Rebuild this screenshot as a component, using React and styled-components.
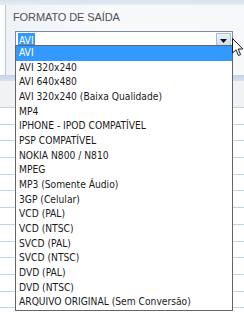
import React from "react";
import styled, { createGlobalStyle } from "styled-components";

const formats = [
  "AVI",
  "AVI 320x240",
  "AVI 640x480",
  "AVI 320x240 (Baixa Qualidade)",
  "MP4",
  "IPHONE - IPOD COMPATÍVEL",
  "PSP COMPATÍVEL",
  "NOKIA N800 / N810",
  "MPEG",
  "MP3 (Somente Áudio)",
  "3GP (Celular)",
  "VCD (PAL)",
  "VCD (NTSC)",
  "SVCD (PAL)",
  "SVCD (NTSC)",
  "DVD (PAL)",
  "DVD (NTSC)",
  "ARQUIVO ORIGINAL (Sem Conversão)",
];

const GlobalStyle = createGlobalStyle`
  html, body {
    margin: 0;
    padding: 0;
    width: 244px;
    height: 320px;
    overflow: hidden;
    background: #ffffff;
  }
  * { box-sizing: border-box; }
`;

const Cursor = () => (
  <CursorWrap>
    <svg width="12" height="19" viewBox="0 0 12 19">
      <path
        d="M0.5 0.5 L0.5 15 L4 11.8 L6.5 17.5 L8.6 16.6 L6.2 11 L10.8 11 Z"
        fill="#ffffff"
        stroke="#1a1a1a"
        strokeWidth="1"
        strokeLinejoin="round"
      />
    </svg>
  </CursorWrap>
);

const App = () => {
  const rows = Array.from({ length: 14 });

  return (
    <Page>
      <GlobalStyle />
      <TopStrip />
      <Panel>
        <Label>FORMATO DE SAÍDA</Label>
        <Select>
          <Current>
            <Selected>AVI</Selected>
          </Current>
          <DropButton>
            <svg width="7" height="4" viewBox="0 0 7 4">
              <path d="M0 0 L7 0 L3.5 4 Z" fill="#111" />
            </svg>
          </DropButton>
        </Select>
      </Panel>
      <HeaderBand />
      <Grid>
        {rows.map((_, i) => (
          <GridRow key={i} $shade={i === 0} />
        ))}
      </Grid>

      <List>
        {formats.map((f, i) => (
          <Option key={f} $active={i === 0}>
            {f}
          </Option>
        ))}
      </List>
      <Cursor />
    </Page>
  );
};

const itemFont = `"DejaVu Sans Condensed", "Liberation Sans", Arial, sans-serif`;

const Page = styled.div`
  position: relative;
  width: 244px;
  height: 320px;
  font-family: "Liberation Sans", Arial, sans-serif;
  background: #fbfcfd;
`;

const TopStrip = styled.div`
  height: 5px;
  background: linear-gradient(#d9e1ec, #e6ecf3);
`;

const Panel = styled.div`
  height: 70px;
  margin-left: 5px;
  border-left: 1px solid #b9c8da;
  padding: 4px 12px 0 7px;
  background: linear-gradient(to right, #eef2f7, #f8f9fb 40%, #f6f8fa);
`;

const Label = styled.div`
  font-size: 11px;
  color: #505050;
  height: 17px;
  line-height: 17px;
  letter-spacing: -0.1px;
`;

const Select = styled.div`
  display: flex;
  margin-left: 2px;
  margin-top: 5px;
  width: 218px;
  height: 19px;
  border: 1px solid #7e8a98;
  background: #ffffff;
  padding: 1px;
`;

const Current = styled.div`
  flex: 1;
  display: flex;
  align-items: center;
  padding-left: 1px;
`;

const Selected = styled.span`
  background: #3399ff;
  color: #ffffff;
  font-family: ${itemFont};
  font-size: 10.2px;
  line-height: 15px;
  padding: 0 1px;
`;

const DropButton = styled.div`
  width: 15px;
  display: flex;
  align-items: center;
  justify-content: center;
  border: 1px solid #a6bfd6;
  background: linear-gradient(#e9f3fb, #c9def0);
`;

const HeaderBand = styled.div`
  height: 6px;
  background: linear-gradient(#c5d3e4, #d8e2ee);
`;

const Grid = styled.div`
  display: flex;
  flex-direction: column;
`;

const GridRow = styled.div`
  height: ${(p) => (p.$shade ? "27px" : "16.7px")};
  border-bottom: 1px solid #c2d3e6;
  background: ${(p) => (p.$shade ? "#f1f2f4" : "#ffffff")};
`;

const List = styled.div`
  position: absolute;
  left: 15px;
  top: 45px;
  width: 218px;
  height: 266px;
  border: 1px solid #646464;
  background: #ffffff;
  display: flex;
  flex-direction: column;
`;

const Option = styled.div`
  height: 14.67px;
  line-height: 14.67px;
  padding-left: 3px;
  font-family: ${itemFont};
  font-size: 10.2px;
  white-space: nowrap;
  color: ${(p) => (p.$active ? "#ffffff" : "#1a1a1a")};
  background: ${(p) => (p.$active ? "#3399ff" : "transparent")};
`;

const CursorWrap = styled.div`
  position: absolute;
  left: 232px;
  top: 38px;
  width: 12px;
  height: 19px;
  line-height: 0;
`;

export default App;
